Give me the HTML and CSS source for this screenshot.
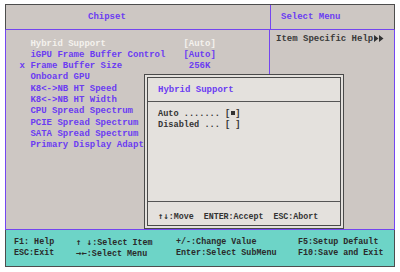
FILE: index.html
```html
<!DOCTYPE html>
<html lang="en">
<head>
    <meta charset="UTF-8">
    <title>BIOS Setup - Chipset</title>
    <link rel="stylesheet" href="styles.css">
</head>
<body>
    <div class="bios">
        <!-- Cabecera -->
        <div class="fila cabecera">
            <div class="celda izq titulo-chipset">Chipset</div>
            <div class="celda der titulo-menu">Select Menu</div>
        </div>

        <!-- Cuerpo -->
        <div class="fila cuerpo">
            <div class="celda izq lista">
                <div class="item activo"><span class="marca"></span><span class="nombre">Hybrid Support</span><span class="valor">[Auto]</span></div>
                <div class="item"><span class="marca"></span><span class="nombre">iGPU Frame Buffer Control</span><span class="valor">[Auto]</span></div>
                <div class="item"><span class="marca">x</span><span class="nombre">Frame Buffer Size</span><span class="valor">&nbsp;256K</span></div>
                <div class="item"><span class="marca"></span><span class="nombre">Onboard GPU</span></div>
                <div class="item"><span class="marca"></span><span class="nombre">K8&lt;-&gt;NB HT Speed</span></div>
                <div class="item"><span class="marca"></span><span class="nombre">K8&lt;-&gt;NB HT Width</span></div>
                <div class="item"><span class="marca"></span><span class="nombre">CPU Spread Spectrum</span></div>
                <div class="item"><span class="marca"></span><span class="nombre">PCIE Spread Spectrum</span></div>
                <div class="item"><span class="marca"></span><span class="nombre">SATA Spread Spectrum</span></div>
                <div class="item"><span class="marca"></span><span class="nombre">Primary Display Adapter</span></div>
            </div>
            <div class="celda der ayuda">
                Item Specific Help<svg class="flechas" width="10" height="7" viewBox="0 0 10 7"><path d="M0 0L4.5 3.5L0 7Z M5 0L9.5 3.5L5 7Z" fill="#333"/></svg>
            </div>
        </div>

        <!-- Pie -->
        <div class="pie">
            <span>F1: Help</span>
            <span><span class="flecha">&#8593; &#8595;</span>:Select Item</span>
            <span>+/-:Change Value</span>
            <span>F5:Setup Default</span>
            <span>ESC:Exit</span>
            <span><span class="flecha">&#8594;&#8592;</span>:Select Menu</span>
            <span>Enter:Select SubMenu</span>
            <span>F10:Save and Exit</span>
        </div>

        <!-- Ventana emergente -->
        <div class="popup">
            <div class="popup-marco">
                <div class="popup-titulo">Hybrid Support</div>
                <div class="popup-opciones">
                    <div class="opcion">Auto ....... [<span class="punto"></span>]</div>
                    <div class="opcion">Disabled ... [ ]</div>
                </div>
                <div class="popup-pie"><span class="flecha">&#8593;&#8595;</span>:Move&nbsp;&nbsp;ENTER:Accept&nbsp;&nbsp;ESC:Abort</div>
            </div>
        </div>
    </div>
</body>
</html>
```

FILE: styles.css
```css
body {
    margin: 0;
    background-color: #ffffff;
    font-family: 'Liberation Mono', 'Courier New', monospace;
}

.bios {
    position: relative;
    width: 390px;
    margin: 4px 0 0 5px;
    background-color: #cdc7c3;
}

.fila {
    display: flex;
}

.celda {
    box-sizing: border-box;
}

.izq {
    width: 265px;
    border-right: 1px solid #7446f0;
}

.der {
    flex: 1;
}

/* Cabecera */
.cabecera {
    height: 26px;
    border: 1px solid #4d4d4d;
    border-bottom: 1px solid #7446f0;
    box-sizing: border-box;
}

.titulo-chipset,
.titulo-menu {
    color: #6b3cf2;
    font-size: 9px;
    font-weight: bold;
    line-height: 24px;
}

.titulo-chipset {
    padding-left: 82px;
}

.titulo-menu {
    padding-left: 10px;
}

/* Cuerpo */
.cuerpo {
    height: 200px;
    border-left: 1px solid #7446f0;
    border-right: 1px solid #7446f0;
    border-bottom: 1px solid #7446f0;
    box-sizing: border-box;
}

.cuerpo .izq {
    width: 264px;
}

.lista {
    padding: 8.5px 0 0 13.6px;
    overflow: hidden;
    white-space: nowrap;
}

.item {
    display: flex;
    font-size: 9px;
    font-weight: bold;
    line-height: 11.33px;
    height: 11.33px;
    color: #6b3cf2;
}

.item.activo {
    color: #f4f2ee;
}

.marca {
    width: 10.8px;
    flex-shrink: 0;
}

.nombre {
    width: 153px;
    flex-shrink: 0;
}

.ayuda {
    padding: 4px 0 0 6px;
    font-size: 9px;
    font-weight: bold;
    line-height: 11.33px;
    color: #3a3a3a;
    white-space: nowrap;
}

.flechas {
    margin-left: 1px;
    vertical-align: -0.5px;
}

.flecha {
    font-family: 'DejaVu Sans Mono', monospace;
    font-size: 9px;
    font-weight: bold;
    line-height: 10px;
}

/* Pie */
.pie {
    display: grid;
    grid-template-columns: 62px 100px 122px 1fr;
    grid-auto-rows: 10.6px;
    height: 37px;
    padding: 7px 0 0 8px;
    box-sizing: border-box;
    background-color: #6dd4c7;
    border: 1px solid #4d4d4d;
    border-top: none;
    font-size: 8.4px;
    font-weight: bold;
    line-height: 10.6px;
    color: #2a2a2a;
    white-space: nowrap;
}

/* Ventana emergente */
.popup {
    position: absolute;
    left: 139px;
    top: 70px;
    width: 200px;
    height: 155px;
    box-sizing: border-box;
    border: 1px solid #4a4a4a;
    padding: 2px;
    background-color: #e4e1dd;
}

.popup-marco {
    height: 100%;
    box-sizing: border-box;
    border: 1px solid #4a4a4a;
    display: flex;
    flex-direction: column;
}

.popup-titulo {
    height: 24px;
    box-sizing: border-box;
    border-bottom: 1px solid #555555;
    padding: 7px 0 0 10px;
    font-size: 9px;
    font-weight: bold;
    line-height: 11px;
    color: #6b3cf2;
}

.popup-opciones {
    flex: 1;
    padding: 7px 0 0 10px;
    font-size: 8.6px;
    font-weight: bold;
    line-height: 11px;
    color: #333333;
}

.opcion {
    white-space: pre;
    height: 11px;
}

.punto {
    display: inline-block;
    width: 3.6px;
    height: 3.6px;
    margin: 0 0.78px;
    background-color: #333333;
    vertical-align: 1.5px;
}

.popup-pie {
    height: 24px;
    box-sizing: border-box;
    border-top: 1px solid #555555;
    padding: 9px 0 0 10px;
    font-size: 8.3px;
    font-weight: bold;
    line-height: 11px;
    color: #333333;
    white-space: nowrap;
}
```
